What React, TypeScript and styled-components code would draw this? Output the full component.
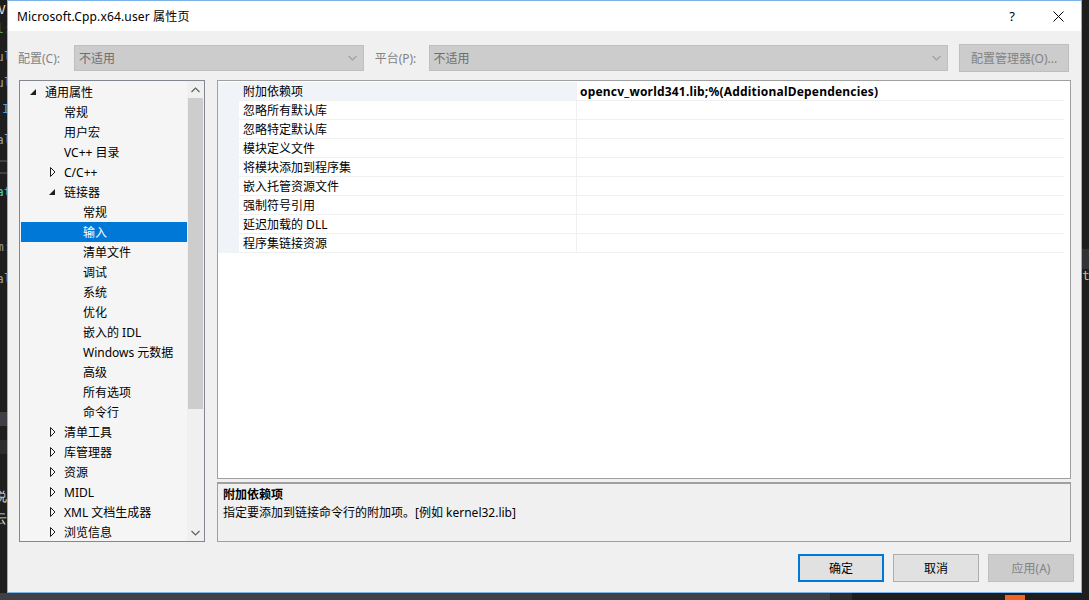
import React from "react";
import styled, { createGlobalStyle } from "styled-components";

const FONT = `"Segoe UI", "Noto Sans", "Noto Sans CJK SC", sans-serif`;

const GlobalStyle = createGlobalStyle`
  html, body { margin: 0; padding: 0; }
  body {
    width: 1089px;
    height: 600px;
    overflow: hidden;
    background: #1e1e1e;
    font-family: ${FONT};
    font-size: 12px;
  }
  * { box-sizing: border-box; }
`;

const Desktop = styled.div`
  position: relative;
  width: 1089px;
  height: 600px;
  overflow: hidden;
  background: #1e1e1e;
`;

const CodeLine = styled.div<{ $color: string }>`
  position: absolute;
  font-family: "DejaVu Sans Mono", monospace;
  font-size: 13px;
  color: ${(p) => p.$color};
  white-space: nowrap;
`;

const Band = styled.div<{ $color: string }>`
  position: absolute;
  background: ${(p) => p.$color};
`;

const Dialog = styled.div`
  position: absolute;
  left: 7px;
  top: 0;
  width: 1075px;
  height: 593px;
  border: 1px solid #7eb4ea;
  background: #f0f0f0;
  display: flex;
  flex-direction: column;
`;

const TitleBar = styled.div`
  height: 30px;
  background: #ffffff;
  display: flex;
  align-items: center;
`;

const Title = styled.div`
  flex: 1;
  padding-left: 9px;
  color: #000;
  font-size: 12px;
  letter-spacing: 0.15px;
`;

const CaptionButton = styled.div`
  width: 46px;
  height: 30px;
  display: flex;
  align-items: center;
  justify-content: center;
  color: #000;
  font-size: 13px;
`;

const Body = styled.div`
  flex: 1;
  display: flex;
  flex-direction: column;
  padding: 13px 0 10px 11px;
`;

const ConfigRow = styled.div`
  height: 28px;
  display: flex;
  align-items: center;
  margin-left: -1px;
  padding-right: 12px;
`;

const Label = styled.div<{ $w: number }>`
  width: ${(p) => p.$w}px;
  color: #838383;
  font-size: 12px;
`;

const Select = styled.div<{ $w: number }>`
  width: ${(p) => p.$w}px;
  height: 26px;
  background: #cccccc;
  border: 1px solid #bfbfbf;
  display: flex;
  align-items: center;
  padding: 0 6px 0 4px;
  color: #6d6d6d;
  font-size: 12px;
  margin-right: 11px;
`;

const SelectText = styled.span`
  flex: 1;
`;

const PushButton = styled.div<{ $w: number; $variant: "default" | "normal" | "disabled" }>`
  width: ${(p) => p.$w}px;
  height: 28px;
  display: flex;
  align-items: center;
  justify-content: center;
  font-size: 12px;
  background: ${(p) => (p.$variant === "disabled" ? "#cccccc" : "#e1e1e1")};
  color: ${(p) => (p.$variant === "disabled" ? "#838383" : "#000")};
  border: ${(p) =>
    p.$variant === "default"
      ? "2px solid #0078d7"
      : p.$variant === "disabled"
      ? "1px solid #bfbfbf"
      : "1px solid #adadad"};
`;

const Main = styled.div`
  margin-top: 8px;
  height: 462px;
  display: flex;
  gap: 12px;
  padding-right: 10px;
`;

const Tree = styled.div`
  width: 186px;
  height: 100%;
  border: 1px solid #828790;
  background: #f5f5f5;
  display: flex;
`;

const TreeList = styled.div`
  flex: 1;
  padding: 1px 0 0 1px;
  overflow: hidden;
`;

const TreeRow = styled.div<{ $level: number; $selected?: boolean }>`
  height: 20px;
  display: flex;
  align-items: center;
  padding-left: ${(p) => 9 + p.$level * 19}px;
  background: ${(p) => (p.$selected ? "#0078d7" : "transparent")};
  color: ${(p) => (p.$selected ? "#fff" : "#000")};
  white-space: nowrap;
  font-size: 12px;
`;

const ArrowSlot = styled.span`
  width: 15px;
  height: 20px;
  display: flex;
  align-items: center;
`;

const ScrollBar = styled.div`
  width: 17px;
  display: flex;
  flex-direction: column;
  align-items: center;
  background: #f0f0f0;
`;

const ScrollArrow = styled.div`
  height: 17px;
  width: 17px;
  display: flex;
  align-items: center;
  justify-content: center;
`;

const ScrollTrack = styled.div`
  flex: 1;
  width: 100%;
  padding: 0 1px;
`;

const ScrollThumb = styled.div`
  height: 311px;
  background: #cdcdcd;
`;

const RightCol = styled.div`
  flex: 1;
  display: flex;
  flex-direction: column;
  gap: 3px;
`;

const Grid = styled.div`
  height: 399px;
  border: 1px solid #a0a0a0;
  background: #ffffff;
  padding-top: 1px;
  padding-right: 6px;
  display: flex;
  flex-direction: column;
`;

const GridRow = styled.div`
  height: 19px;
  display: grid;
  grid-template-columns: 21px 338px 1fr;
`;

const Gutter = styled.div`
  background: #f0f4f9;
`;

const NameCell = styled.div<{ $active?: boolean }>`
  display: flex;
  align-items: center;
  padding-left: 4px;
  border-bottom: 1px solid #f0f0f0;
  border-right: 1px solid #f0f0f0;
  background: ${(p) => (p.$active ? "#f0f4f9" : "#ffffff")};
  color: #000;
  font-size: 12px;
  white-space: nowrap;
`;

const ValueCell = styled.div<{ $bold?: boolean }>`
  display: flex;
  align-items: center;
  padding-left: 3px;
  border-bottom: 1px solid #f0f0f0;
  font-weight: ${(p) => (p.$bold ? 700 : 400)};
  letter-spacing: ${(p) => (p.$bold ? "0.2px" : "0")};
  color: #000;
  font-size: 12px;
  white-space: nowrap;
`;

const GridFill = styled.div`
  flex: 1;
`;

const Description = styled.div`
  height: 60px;
  border: 1px solid #a0a0a0;
  border-top-width: 2px;
  background: #f0f0f0;
  padding: 1px 5px;
  display: flex;
  flex-direction: column;
`;

const DescTitle = styled.div`
  font-weight: 700;
  line-height: 19px;
  color: #000;
`;

const DescText = styled.div`
  line-height: 17px;
  color: #000;
`;

const Footer = styled.div`
  margin-top: 12px;
  display: flex;
  justify-content: flex-end;
  gap: 9px;
  padding-right: 7px;
`;

const Expanded = () => (
  <svg width="6" height="6" viewBox="0 0 6 6">
    <polygon points="6,0 6,6 0,6" fill="#1e1e1e" />
  </svg>
);

const Collapsed = () => (
  <svg width="6" height="10" viewBox="0 0 6 10" style={{ marginLeft: 1 }}>
    <polygon points="0.5,0.5 5,5 0.5,9.5" fill="none" stroke="#1e1e1e" strokeWidth="1" />
  </svg>
);

type Item = { label: string; level: number; arrow?: "open" | "closed"; selected?: boolean };

const treeItems: Item[] = [
  { label: "通用属性", level: 0, arrow: "open" },
  { label: "常规", level: 1 },
  { label: "用户宏", level: 1 },
  { label: "VC++ 目录", level: 1 },
  { label: "C/C++", level: 1, arrow: "closed" },
  { label: "链接器", level: 1, arrow: "open" },
  { label: "常规", level: 2 },
  { label: "输入", level: 2, selected: true },
  { label: "清单文件", level: 2 },
  { label: "调试", level: 2 },
  { label: "系统", level: 2 },
  { label: "优化", level: 2 },
  { label: "嵌入的 IDL", level: 2 },
  { label: "Windows 元数据", level: 2 },
  { label: "高级", level: 2 },
  { label: "所有选项", level: 2 },
  { label: "命令行", level: 2 },
  { label: "清单工具", level: 1, arrow: "closed" },
  { label: "库管理器", level: 1, arrow: "closed" },
  { label: "资源", level: 1, arrow: "closed" },
  { label: "MIDL", level: 1, arrow: "closed" },
  { label: "XML 文档生成器", level: 1, arrow: "closed" },
  { label: "浏览信息", level: 1, arrow: "closed" },
];

const props = [
  "附加依赖项",
  "忽略所有默认库",
  "忽略特定默认库",
  "模块定义文件",
  "将模块添加到程序集",
  "嵌入托管资源文件",
  "强制符号引用",
  "延迟加载的 DLL",
  "程序集链接资源",
];

const Chevron = ({ dir, color = "#a0a0a0" }: { dir: "up" | "down"; color?: string }) => (
  <svg width="9" height="6" viewBox="0 0 9 6">
    <polyline
      points={dir === "down" ? "0.5,1 4.5,5 8.5,1" : "0.5,5 4.5,1 8.5,5"}
      fill="none"
      stroke={color}
      strokeWidth="1.2"
    />
  </svg>
);

export default function App() {
  return (
    <>
      <GlobalStyle />
      <Desktop>
        <CodeLine $color="#dcdcdc" style={{ left: -2, top: 2 }}>V</CodeLine>
        <CodeLine $color="#57a64a" style={{ left: -4, top: 21 }}>l:</CodeLine>
        <CodeLine $color="#9b9b9b" style={{ left: -4, top: 49 }}>ul</CodeLine>
        <CodeLine $color="#9b9b9b" style={{ left: -4, top: 75 }}>ul</CodeLine>
        <CodeLine $color="#569cd6" style={{ left: 2, top: 101 }}>I</CodeLine>
        <CodeLine $color="#9b9b9b" style={{ left: -4, top: 132 }}>al</CodeLine>
        <Band $color="#3f3f46" style={{ left: 0, top: 160, width: 8, height: 2 }} />
        <Band $color="#3f3f46" style={{ left: 0, top: 172, width: 8, height: 2 }} />
        <CodeLine $color="#4ec9b0" style={{ left: -4, top: 184 }}>at</CodeLine>
        <CodeLine $color="#9b9b9b" style={{ left: -4, top: 239 }}>m:</CodeLine>
        <CodeLine $color="#9b9b9b" style={{ left: -4, top: 271 }}>al</CodeLine>
        <Band $color="#3f3f46" style={{ left: 0, top: 412, width: 8, height: 14 }} />
        <Band $color="#2d2d30" style={{ left: 0, top: 440, width: 8, height: 14 }} />
        <CodeLine $color="#dcdcdc" style={{ left: -6, top: 488 }}>说</CodeLine>
        <CodeLine $color="#dcdcdc" style={{ left: -6, top: 510 }}>云</CodeLine>
        <Band $color="#333337" style={{ left: 1082, top: 249, width: 7, height: 20 }} />
        <CodeLine $color="#d7ba7d" style={{ left: 1082, top: 268 }}>ti</CodeLine>
        <Band $color="#3f3f46" style={{ left: 0, top: 593, width: 830, height: 7 }} />
        <Band $color="#2d2d30" style={{ left: 830, top: 593, width: 22, height: 7 }} />
        <Band $color="#f0642a" style={{ left: 1005, top: 595, width: 20, height: 5 }} />
        <Dialog>
          <TitleBar>
            <Title>Microsoft.Cpp.x64.user 属性页</Title>
            <CaptionButton>?</CaptionButton>
            <CaptionButton>
              <svg width="11" height="11" viewBox="0 0 11 11">
                <path d="M0.5 0.5 L10.5 10.5 M10.5 0.5 L0.5 10.5" stroke="#000" strokeWidth="1" />
              </svg>
            </CaptionButton>
          </TitleBar>
          <Body>
            <ConfigRow>
              <Label $w={56}>配置(C):</Label>
              <Select $w={290}>
                <SelectText>不适用</SelectText>
                <Chevron dir="down" />
              </Select>
              <Label $w={54}>平台(P):</Label>
              <Select $w={520}>
                <SelectText>不适用</SelectText>
                <Chevron dir="down" />
              </Select>
              <PushButton $w={110} $variant="disabled">配置管理器(O)...</PushButton>
            </ConfigRow>
            <Main>
              <Tree>
                <TreeList>
                  {treeItems.map((it, i) => (
                    <TreeRow key={i} $level={it.level} $selected={it.selected}>
                      <ArrowSlot>
                        {it.arrow === "open" && <Expanded />}
                        {it.arrow === "closed" && <Collapsed />}
                      </ArrowSlot>
                      {it.label}
                    </TreeRow>
                  ))}
                </TreeList>
                <ScrollBar>
                  <ScrollArrow>
                    <Chevron dir="up" color="#606060" />
                  </ScrollArrow>
                  <ScrollTrack>
                    <ScrollThumb />
                  </ScrollTrack>
                  <ScrollArrow>
                    <Chevron dir="down" color="#606060" />
                  </ScrollArrow>
                </ScrollBar>
              </Tree>
              <RightCol>
                <Grid>
                  {props.map((p, i) => (
                    <GridRow key={i}>
                      <Gutter />
                      <NameCell $active={i === 0}>{p}</NameCell>
                      <ValueCell $bold={i === 0}>
                        {i === 0 ? "opencv_world341.lib;%(AdditionalDependencies)" : ""}
                      </ValueCell>
                    </GridRow>
                  ))}
                  <GridFill />
                </Grid>
                <Description>
                  <DescTitle>附加依赖项</DescTitle>
                  <DescText>指定要添加到链接命令行的附加项。[例如 kernel32.lib]</DescText>
                </Description>
              </RightCol>
            </Main>
            <Footer>
              <PushButton $w={86} $variant="default">确定</PushButton>
              <PushButton $w={86} $variant="normal">取消</PushButton>
              <PushButton $w={86} $variant="disabled">应用(A)</PushButton>
            </Footer>
          </Body>
        </Dialog>
      </Desktop>
    </>
  );
}
